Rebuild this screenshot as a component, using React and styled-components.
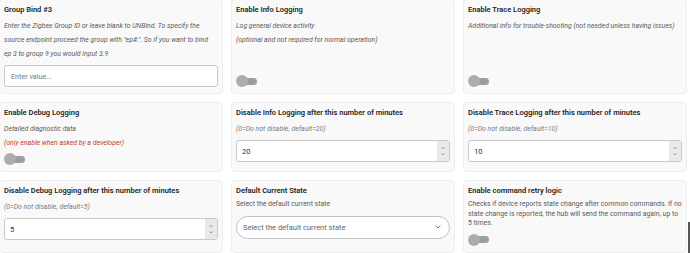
import styled, { createGlobalStyle } from "styled-components";

const GlobalStyle = createGlobalStyle`
  html, body {
    margin: 0;
    padding: 0;
    background: #ffffff;
    font-family: Roboto, "Liberation Sans", sans-serif;
    overflow: hidden;
  }
`;

const Grid = styled.div`
  display: grid;
  grid-template-columns: repeat(3, 1fr);
  column-gap: 8px;
  row-gap: 8px;
  margin: -1px 3px 0 -1px;
`;

const Card = styled.div`
  display: flex;
  flex-direction: column;
  background: #f9f9f9;
  border: 1px solid #ededed;
  border-radius: 4px;
  padding: 4px 4px 6px 4px;
  box-sizing: border-box;
`;

const Title = styled.div`
  font-size: 7.5px;
  font-weight: 600;
  color: #1e1e1e;
  line-height: 12px;
  margin-bottom: 3px;
`;

const Desc = styled.div`
  font-size: 6.9px;
  font-style: ${(p) => (p.$plain ? "normal" : "italic")};
  color: ${(p) => (p.$red ? "#c0392b" : p.$light ? "#7a7a7a" : "#5a5a5a")};
  line-height: ${(p) => (p.$plain ? "9.6px" : "14px")};
  margin-bottom: ${(p) => (p.$plain ? "3px" : "0")};
`;

const TextInput = styled.input`
  display: block;
  width: 100%;
  height: 22px;
  box-sizing: border-box;
  margin-top: 4px;
  border: 1px solid #c9c9c9;
  border-radius: 3px;
  background: #fff;
  padding: 0 6px;
  font-family: Roboto, "Liberation Sans", sans-serif;
  font-size: 7.2px;
  color: #333;
  outline: none;

  &::placeholder {
    color: #777;
  }
`;

const NumberBox = styled.div`
  display: flex;
  height: 22px;
  margin-top: 4px;
  border: 1px solid #c9c9c9;
  border-radius: 3px;
  background: #fff;
  overflow: hidden;
  box-sizing: border-box;
`;

const NumberValue = styled.div`
  flex: 1;
  display: flex;
  align-items: center;
  padding-left: 5px;
  font-size: 7.5px;
  color: #333;
`;

const Spinner = styled.div`
  width: 12px;
  background: #e9e9e9;
  display: flex;
  flex-direction: column;
  align-items: center;
  justify-content: center;
  gap: 4px;
`;

const SelectBox = styled.div`
  display: flex;
  align-items: center;
  justify-content: space-between;
  height: 23px;
  margin-top: 3px;
  border: 1px solid #c2c2c2;
  border-radius: 12px;
  background: #fff;
  padding: 0 8px 0 6px;
  box-sizing: border-box;
  font-size: 7.5px;
  color: #666;
`;

const Toggle = styled.div`
  position: relative;
  width: 21px;
  height: 12px;
  margin-top: auto;
  padding-top: ${(p) => p.$gap || 0}px;
  flex-shrink: 0;
`;

const Track = styled.div`
  position: absolute;
  left: 3px;
  bottom: 2.5px;
  width: 18px;
  height: 7px;
  border-radius: 4px;
  background: #9d9d9d;
`;

const Knob = styled.div`
  position: absolute;
  left: 0;
  bottom: 0;
  width: 12px;
  height: 12px;
  border-radius: 50%;
  background: #acacac;
`;

const EdgeLine = styled.div`
  position: fixed;
  right: 0;
  top: 222px;
  width: 2px;
  height: 40px;
  background: #555;
`;

const Chevron = ({ up, size = 5 }) => (
  <svg width={size} height={size * 0.6} viewBox="0 0 10 6">
    <path
      d={up ? "M1 5 L5 1 L9 5" : "M1 1 L5 5 L9 1"}
      fill="none"
      stroke="#555"
      strokeWidth="1.4"
    />
  </svg>
);

const Switch = ({ gap }) => (
  <Toggle $gap={gap}>
    <Track />
    <Knob />
  </Toggle>
);

const NumberInput = ({ value }) => (
  <NumberBox>
    <NumberValue>{value}</NumberValue>
    <Spinner>
      <Chevron up size={4} />
      <Chevron size={4} />
    </Spinner>
  </NumberBox>
);

export default function App() {
  return (
    <>
      <GlobalStyle />
      <Grid>
        <Card>
          <Title>Group Bind #3</Title>
          <Desc>
            Enter the Zigbee Group ID or leave blank to UNBind. To specify the
            <br />
            source endpoint proceed the group with "ep#.". So if you want to bind
            <br />
            ep 3 to group 9 you would input 3.9
          </Desc>
          <TextInput placeholder="Enter value..." />
        </Card>
        <Card>
          <Title>Enable Info Logging</Title>
          <Desc>Log general device activity</Desc>
          <Desc>(optional and not required for normal operation)</Desc>
          <Switch />
        </Card>
        <Card>
          <Title>Enable Trace Logging</Title>
          <Desc>Additional info for trouble-shooting (not needed unless having issues)</Desc>
          <Switch />
        </Card>

        <Card>
          <Title>Enable Debug Logging</Title>
          <Desc>Detailed diagnostic data</Desc>
          <Desc $red>(only enable when asked by a developer)</Desc>
          <Switch gap={3} />
        </Card>
        <Card>
          <Title>Disable Info Logging after this number of minutes</Title>
          <Desc $light>(0=Do not disable, default=20)</Desc>
          <NumberInput value="20" />
        </Card>
        <Card>
          <Title>Disable Trace Logging after this number of minutes</Title>
          <Desc $light>(0=Do not disable, default=10)</Desc>
          <NumberInput value="10" />
        </Card>

        <Card>
          <Title>Disable Debug Logging after this number of minutes</Title>
          <Desc $light>(0=Do not disable, default=5)</Desc>
          <NumberInput value="5" />
        </Card>
        <Card>
          <Title>Default Current State</Title>
          <Desc $plain>Select the default current state</Desc>
          <SelectBox>
            <span>Select the default current state</span>
            <Chevron size={6} />
          </SelectBox>
        </Card>
        <Card>
          <Title>Enable command retry logic</Title>
          <Desc $plain>
            Checks if device reports state change after common commands. If no
            state change is reported, the hub will send the command again, up to
            5 times.
          </Desc>
          <Switch gap={2} />
        </Card>
      </Grid>
      <EdgeLine />
    </>
  );
}
